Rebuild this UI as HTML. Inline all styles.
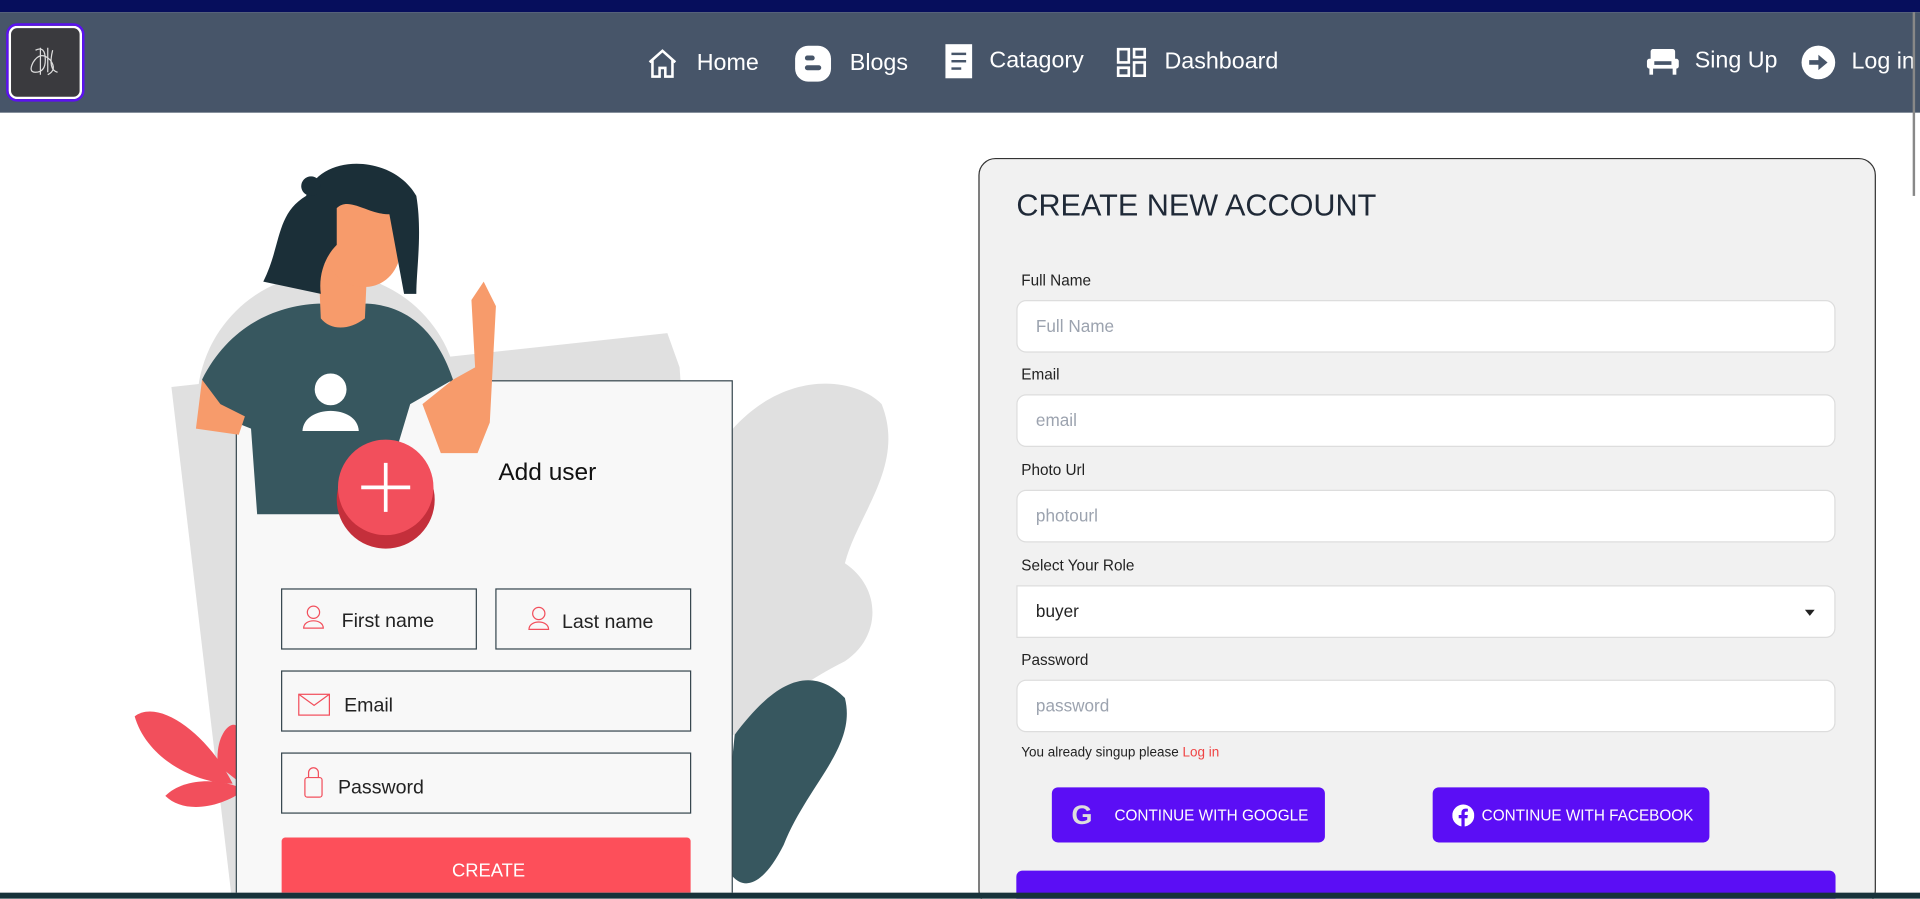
<!DOCTYPE html>
<html><head><meta charset="utf-8"><style>
html,body{margin:0;padding:0;width:1920px;height:899px;overflow:hidden;background:#fff}
#w{position:absolute;left:0;top:0;width:1568px;height:734px;transform:scale(1.2245);transform-origin:0 0;font-family:"Liberation Sans",sans-serif;background:#fff;overflow:hidden}
.top{position:absolute;left:0;top:0;width:1568px;height:10px;background:#060e5c}
.nav{position:absolute;left:0;top:10px;width:1568px;height:82px;background:#475569}
.logo{position:absolute;left:5px;top:9px;width:60px;height:60px;border:2px solid #5b12f0;border-radius:9px;background:#3a3a3e;box-shadow:inset 0 0 0 2px #fff}
.ni{position:absolute;color:#fff;font-size:19px;top:30px;display:flex;align-items:center;gap:14px}
.ni svg{fill:#fff}
.card{position:absolute;left:799px;top:129px;width:731px;height:610px;background:#f1f1f1;border:1px solid #333;border-radius:14px}
.card h1{position:absolute;left:30px;top:24px;margin:0;font-weight:400;font-size:25px;color:#1f2937}
.lb{position:absolute;left:34px;font-size:12.5px;color:#222}
.in{position:absolute;left:30px;width:669px;height:43px;background:#fff;border:1px solid #ddd;border-radius:8px;box-sizing:border-box;padding-left:15px;line-height:41px;font-size:14px;color:#9ca3af}
.btn{position:absolute;top:513px;height:45px;background:#5b0ef5;border-radius:5px;color:#fff;font-size:12.5px;display:flex;align-items:center}
.bot{position:absolute;left:0;top:729px;width:1568px;height:5px;background:#17323a}
</style></head><body><div id="w">
<div class="top"></div>
<div class="nav">
 <div class="logo"><svg width="60" height="60" viewBox="0 0 60 60"><g fill="none" stroke="#ddd" stroke-width="1"><path d="M22 20 q8 -4 8 8 q0 10 -8 10 q-6 0 -2 -8 q6 -10 14 -2 q6 8 -2 12 M26 18 v22 M32 18 v20 M36 20 q-4 16 4 18"/></g></svg></div>
 <div class="ni" style="left:527px;top:28px"><svg width="28" height="28" viewBox="0 0 24 24"><path fill="none" stroke="#fff" stroke-width="1.8" d="M3 11 12 3l9 8M5 9.5V21h5v-6h4v6h5V9.5"/></svg>Home</div>
 <div class="ni" style="left:648px;top:26px"><svg width="32" height="32" viewBox="0 0 24 24"><rect x="1" y="1" width="22" height="22" rx="8"/><rect x="7" y="7" width="6" height="3" rx="1.5" fill="#475569"/><rect x="7" y="13" width="10" height="3" rx="1.5" fill="#475569"/></svg>Blogs</div>
 <div class="ni" style="left:772px;top:26px"><svg width="22" height="28" viewBox="0 0 22 28"><rect width="22" height="28"/><rect x="5" y="7" width="12" height="2" fill="#475569"/><rect x="5" y="13" width="12" height="2" fill="#475569"/><rect x="5" y="19" width="8" height="2" fill="#475569"/></svg>Catagory</div>
 <div class="ni" style="left:911px;top:28px"><svg width="26" height="26" viewBox="0 0 24 24"><path fill="none" stroke="#fff" stroke-width="2" d="M2 2h8v10H2zM14 2h8v6h-8zM14 12h8v10h-8zM2 16h8v6H2z"/></svg>Dashboard</div>
 <div class="ni" style="left:1344px;top:27px;gap:12px"><svg width="28" height="26" viewBox="0 0 28 26"><rect x="4" y="3" width="20" height="10" rx="2"/><rect x="1" y="11" width="26" height="8" rx="2"/><rect x="3" y="18" width="3" height="6"/><rect x="22" y="18" width="3" height="6"/><rect x="7" y="13" width="14" height="3" fill="#475569"/></svg>Sing Up</div>
 <div class="ni" style="left:1470px;top:26px;gap:12px"><svg width="30" height="30" viewBox="0 0 24 24"><circle cx="12" cy="12" r="11"/><path fill="#475569" d="M6 10.5h6V7l6 5-6 5v-3.5H6z"/></svg>Log in</div>
</div>
<div style="position:absolute;left:1562px;top:10px;width:2px;height:150px;background:#888"></div>

<svg style="position:absolute;left:0;top:92px" width="790" height="637" viewBox="0 92 790 637">
 <path d="M140 316 L545 272 L555 300 L585 740 L190 740 Z" fill="#e0e0e0"/>
 <path d="M560 420 C600 300 690 300 720 330 C740 380 700 420 690 460 C720 480 720 520 690 540 C650 560 630 580 600 600 L560 600 Z" fill="#e0e0e0"/>
 <path d="M600 600 C630 560 660 540 690 570 C700 610 660 640 640 690 C620 730 600 730 590 700 Z" fill="#37575f"/>
 <path d="M110 585 C130 570 170 600 190 640 C160 640 120 620 110 585Z" fill="#f24f5c"/>
 <path d="M135 650 C150 635 180 635 200 645 C180 660 150 665 135 650Z" fill="#f24f5c"/>
 <path d="M178 625 C175 600 190 585 195 595 L197 640Z" fill="#f24f5c"/>
 <circle cx="268" cy="330" r="107" fill="#e0e0e0"/>
 <rect x="193" y="311" width="405" height="430" fill="#f8f8f8" stroke="#37474f" stroke-width="1"/>
 <path d="M165 310 C185 270 220 250 260 248 L300 248 C340 250 360 280 370 310 L335 330 L320 380 L290 420 L210 420 L205 350 L180 340 Z" fill="#37575f"/>
 <path d="M165 310 L180 330 L200 340 L195 355 L160 350 Z" fill="#f79b6b"/>
 <path d="M370 310 L345 330 L360 370 L390 370 L400 345 L405 250 L395 230 L385 245 L388 300 Z" fill="#f79b6b"/>
 <path d="M260 215 L300 215 L298 260 C285 270 270 270 262 260 Z" fill="#f79b6b"/>
 <path d="M255 170 C265 140 320 145 330 175 L325 215 C315 240 285 240 270 220 C260 210 252 190 255 170Z" fill="#f79b6b"/>
 <path d="M250 160 C260 125 320 125 340 160 C345 190 340 220 340 240 L330 240 L318 175 C300 175 285 160 275 170 L275 200 C265 210 260 225 262 240 L215 230 C230 200 225 175 250 160Z" fill="#1b2f38"/>
 <circle cx="254" cy="152" r="8" fill="#1b2f38"/>
 <circle cx="270" cy="318" r="13" fill="#fff"/><path d="M247 352 C248 330 292 330 293 352Z" fill="#fff"/>
 <circle cx="315" cy="408" r="40" fill="#c42f3b"/><circle cx="315" cy="398" r="39" fill="#f24f5c"/>
 <path d="M295 398h40M315 378v40" stroke="#fff" stroke-width="3"/>
 <text x="407" y="392" font-family="Liberation Sans,sans-serif" font-size="20" fill="#111">Add user</text>
 <g fill="#f8f8f8" stroke="#37474f" stroke-width="1">
  <rect x="230" y="481" width="159" height="49"/><rect x="405" y="481" width="159" height="49"/>
  <rect x="230" y="548" width="334" height="49"/><rect x="230" y="615" width="334" height="49"/></g>
 <g fill="none" stroke="#f24f5c" stroke-width="1"><circle cx="256" cy="500" r="5"/><path d="M248 513 c0-8 16-8 16 0z"/><circle cx="440" cy="501" r="5"/><path d="M432 514 c0-8 16-8 16 0z"/>
  <rect x="244" y="567" width="25" height="17"/><path d="M244 567l12.5 9 12.5-9"/><rect x="249" y="635" width="14" height="16" rx="2"/><path d="M252 635v-4a4 4 0 0 1 8 0v4"/></g>
 <g font-family="Liberation Sans,sans-serif" font-size="16" fill="#222"><text x="279" y="512">First name</text><text x="459" y="513">Last name</text><text x="281" y="581">Email</text><text x="276" y="648">Password</text></g>
 <rect x="230" y="684" width="334" height="60" rx="3" fill="#fd4f5a"/>
 <text x="399" y="716" text-anchor="middle" font-family="Liberation Sans,sans-serif" font-size="15" fill="#fff">CREATE</text>
</svg>

<div class="card">
 <h1>CREATE NEW ACCOUNT</h1>
 <div class="lb" style="top:92px">Full Name</div><div class="in" style="top:115px">Full Name</div>
 <div class="lb" style="top:169px">Email</div><div class="in" style="top:192px">email</div>
 <div class="lb" style="top:247px">Photo Url</div><div class="in" style="top:270px">photourl</div>
 <div class="lb" style="top:325px">Select Your Role</div><div class="in" style="top:348px;color:#222;border-radius:0 8px 8px 0">buyer<span style="position:absolute;right:16px;top:19px;border:4px solid transparent;border-top:5px solid #222"></span></div>
 <div class="lb" style="top:402px">Password</div><div class="in" style="top:425px">password</div>
 <div class="lb" style="top:479px;font-size:11px">You already singup please <span style="color:#ef4444">Log in</span></div>
 <div class="btn" style="left:59px;width:223px"><span style="font-size:22px;font-weight:bold;margin:0 18px 0 16px;color:#ddd">G</span>CONTINUE WITH GOOGLE</div>
 <div class="btn" style="left:370px;width:226px"><svg style="margin:0 6px 0 16px" width="18" height="18" viewBox="0 0 24 24"><circle cx="12" cy="12" r="12" fill="#fff"/><path d="M13.5 24v-9h3l.5-3.5h-3.5V9.5c0-1 .3-1.8 1.8-1.8H17V4.6c-.3 0-1.4-.1-2.6-.1-2.6 0-4.4 1.6-4.4 4.5v2.5H7V15h3v9z" fill="#5b0ef5"/></svg>CONTINUE WITH FACEBOOK</div>
 <div class="btn" style="left:30px;top:581px;width:669px;height:29px;border-radius:5px 5px 0 0"></div>
</div>
<div class="bot"></div>
</div></body></html>
